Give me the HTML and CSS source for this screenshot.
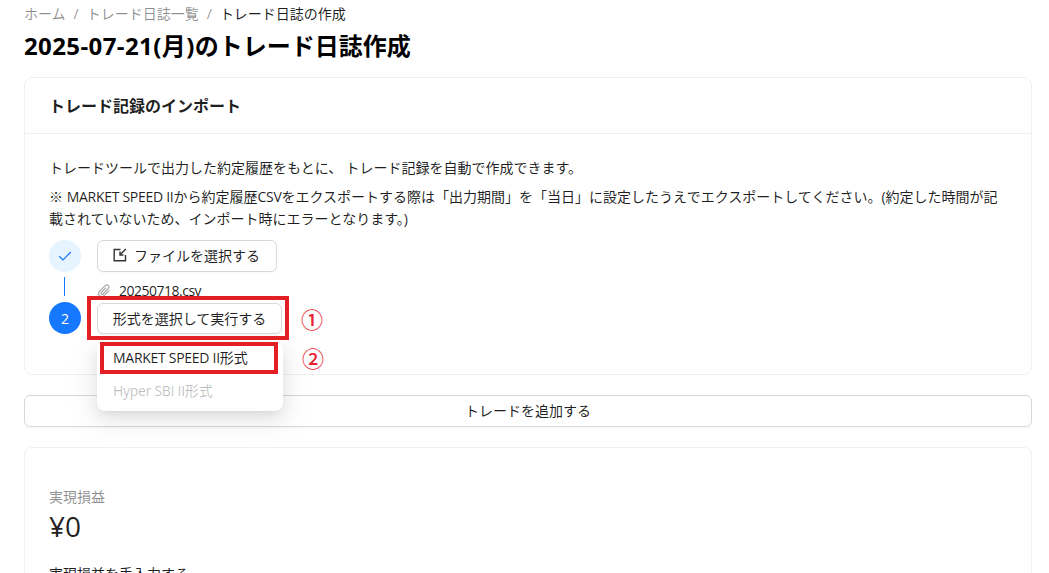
FILE: index.html
```html
<!DOCTYPE html>
<html lang="ja">
<head>
<meta charset="utf-8">
<title>トレード日誌作成</title>
<link rel="stylesheet" href="styles.css">
</head>
<body>
<main class="page">
  <nav class="crumbs">
    <span class="crumb">ホーム</span><span class="sep">/</span>
    <span class="crumb">トレード日誌一覧</span><span class="sep">/</span>
    <span class="crumb current">トレード日誌の作成</span>
  </nav>
  <h1 class="title"><span class="title-date">2025-07-21(月)</span>のトレード日誌作成</h1>

  <section class="card import">
    <header class="card-head">トレード記録のインポート</header>
    <div class="card-body">
      <p class="lead">トレードツールで出力した約定履歴をもとに、 トレード記録を自動で作成できます。</p>
      <p class="note">※ <span class="latin">MARKET SPEED II</span>から約定履歴<span class="latin">CSV</span>をエクスポートする際は「出力期間」を「当日」に設定したうえでエクスポートしてください。(約定した時間が記載されていないため、インポート時にエラーとなります。)</p>
      <div class="steps">
        <div class="step">
          <div class="rail">
            <span class="dot done">
              <svg width="14" height="14" viewBox="0 0 14 14" fill="none"><path d="M1.200 7.300 5 11 12.800 3" stroke="#1677ff" stroke-width="1.200"/></svg>
            </span>
            <span class="line"></span>
          </div>
          <div class="step-main">
            <button class="btn file-btn">
              <svg width="14" height="14" viewBox="0 0 14 14" fill="none" stroke="#333" stroke-width="1.400"><path d="M7.500 1.500H1.200v11.300h11.300V7"/><path d="M12.800 1 7 6.800"/><path d="M7 3.500v3.500h3.500"/></svg>
              <span>ファイルを選択する</span>
            </button>
            <div class="file">
              <svg width="13" height="14" viewBox="0 0 13 14" fill="none" stroke="#a8a8a8" stroke-width="1.200"><path d="M11.300 6.400 6 11.700c-1.300 1.300-3.300 1.300-4.500 0-1.200-1.200-1.200-3 0-4.300l5.700-5.800c.9-.9 2.300-.9 3.100 0 .8.800.8 2.100 0 3L5 10c-.5.500-1.200.500-1.600 0-.4-.4-.4-1.100 0-1.600L8.200 3.600"/></svg>
              <span class="file-name">20250718.csv</span>
            </div>
          </div>
        </div>
        <div class="step">
          <div class="rail"><span class="dot active">2</span></div>
          <div class="step-main">
            <button class="btn run-btn">形式を選択して実行する</button>
          </div>
        </div>
        <div class="menu">
          <div class="menu-item"><span class="latin">MARKET SPEED II</span>形式</div>
          <div class="menu-item disabled"><span class="latin">Hyper SBI II</span>形式</div>
        </div>
        <div class="mark mark-run"></div>
        <div class="mark mark-item"></div>
        <span class="num num-one">①</span>
        <span class="num num-two">②</span>
      </div>
    </div>
  </section>

  <button class="btn add-btn">トレードを追加する</button>

  <section class="card result">
    <div class="result-label">実現損益</div>
    <div class="result-value">¥0</div>
    <div class="result-link">実現損益を手入力する</div>
  </section>
</main>
</body>
</html>
```
FILE: styles.css
```css
* { box-sizing: border-box; }
html, body { margin: 0; height: 573px; overflow: hidden; background: #fff; }
body {
  font-family: "Open Sans", "Noto Sans CJK JP", sans-serif;
  font-size: 14px;
  color: rgba(0, 0, 0, 0.88);
}
.page { padding: 3px 17px 0 24px; }
.crumbs { display: flex; align-items: center; height: 22px; color: rgba(0, 0, 0, 0.45); line-height: 22px; font-size: 14px; }
.sep { margin: 0 8px; }
.crumb.current { color: rgba(0, 0, 0, 0.88); }
.title { margin: 2px 0 0; font-size: 24px; line-height: 38px; font-weight: 700; color: #000; }
.title-date { letter-spacing: 0.4px; }
.latin { letter-spacing: -0.28px; }
.file-name { letter-spacing: -0.5px; }
.card { border: 1px solid #f0f0f0; border-radius: 8px; background: #fff; }
.import { margin-top: 12px; height: 298px; }
.card-head { height: 56px; padding: 0 24px 2px; display: flex; align-items: center; font-size: 16px; font-weight: 700; border-bottom: 1px solid #f0f0f0; }
.card-body { padding: 23px 24px 0; }
.lead { margin: 0 0 7px; line-height: 22px; word-spacing: -0.5px; }
.note { margin: 0; line-height: 22px; }
.steps { position: relative; margin-top: 10px; }
.step { display: flex; gap: 16px; }
.rail { width: 32px; display: flex; flex-direction: column; align-items: center; }
.dot { width: 32px; height: 32px; border-radius: 50%; display: flex; align-items: center; justify-content: center; font-size: 14px; flex: none; }
.dot.done { background: #e6f4ff; }
.dot.active { background: #1677ff; color: #fff; }
.line { width: 1px; height: 19px; margin: 5px 1px 0 0; background: #1677ff; }
.btn {
  font: inherit;
  color: rgba(0, 0, 0, 0.88);
  background: #fff;
  border: 1px solid #d9d9d9;
  border-radius: 6px;
  box-shadow: 0 2px 0 rgba(0, 0, 0, 0.02);
  height: 32px;
  padding: 0 15px 2px;
  display: flex;
  align-items: center;
  justify-content: center;
  white-space: nowrap;
}
.file-btn { gap: 7px; width: 180px; padding-right: 16px; }
.file { display: flex; align-items: center; gap: 8px; height: 22px; margin-top: 8px; padding-left: 1px; line-height: 22px; }
.step-main { flex: 1; }
.step + .step .step-main { padding-top: 1px; }
.run-btn { width: 185px; height: 31px; padding: 0 0 2px; }
.menu {
  position: absolute;
  left: 48px;
  top: 102px;
  width: 186px;
  height: 69px;
  padding: 1px 4px 0;
  background: #fff;
  border-radius: 8px;
  box-shadow: 0 6px 16px rgba(0, 0, 0, 0.08), 0 3px 6px -4px rgba(0, 0, 0, 0.12), 0 9px 28px 8px rgba(0, 0, 0, 0.05);
}
.menu-item { height: 30px; padding: 0 12px; line-height: 22px; display: flex; align-items: center; border-radius: 4px; color: rgba(0, 0, 0, 0.88); white-space: pre; }
.menu-item + .menu-item { margin-top: 3px; }
.menu-item.disabled { color: rgba(0, 0, 0, 0.25); }
.mark { position: absolute; border: 4px solid #e31e24; }
.mark-run { left: 38px; top: 56px; width: 202px; height: 44px; }
.mark-item { left: 51px; top: 102px; width: 178px; height: 32px; }
.num { position: absolute; color: #e8212f; font-size: 22px; font-weight: 500; line-height: 24px; }
.num-one { left: 252px; top: 67px; }
.num-two { left: 253px; top: 106px; }
.add-btn { width: 100%; margin-top: 20px; }
.result { margin-top: 20px; height: 160px; padding: 38px 24px 0; }
.result-label { color: rgba(0, 0, 0, 0.45); line-height: 22px; }
.result-value { font-size: 28px; line-height: 36px; }
.result-link { margin-top: 19px; line-height: 22px; }
```
